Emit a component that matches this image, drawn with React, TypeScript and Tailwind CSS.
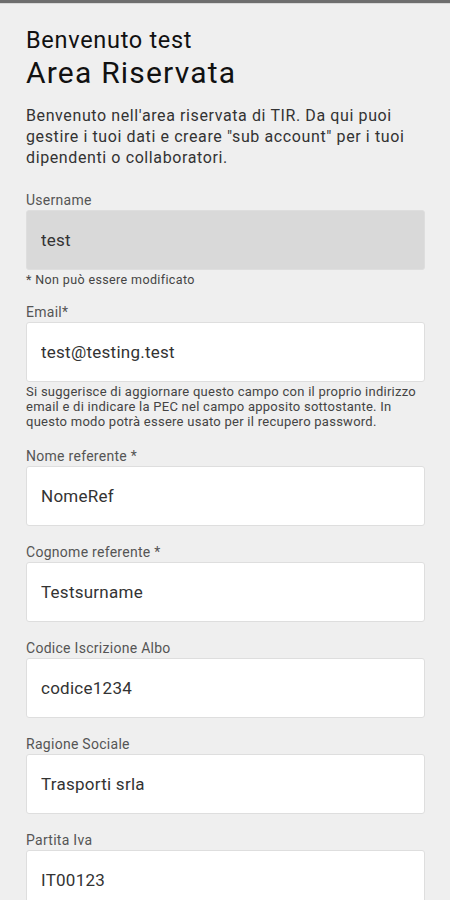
import { useState } from 'react';

type Field = {
  label: string;
  value: string;
  disabled?: boolean;
  note?: string;
  help?: string;
};

const FIELDS: Field[] = [
  { label: 'Username', value: 'test', disabled: true, note: '* Non può essere modificato' },
  {
    label: 'Email*',
    value: 'test@testing.test',
    help: 'Si suggerisce di aggiornare questo campo con il proprio indirizzo email e di indicare la PEC nel campo apposito sottostante. In questo modo potrà essere usato per il recupero password.',
  },
  { label: 'Nome referente *', value: 'NomeRef' },
  { label: 'Cognome referente *', value: 'Testsurname' },
  { label: 'Codice Iscrizione Albo', value: 'codice1234' },
  { label: 'Ragione Sociale', value: 'Trasporti srla' },
  { label: 'Partita Iva', value: 'IT00123' },
];

export default function App() {
  const [values, setValues] = useState<string[]>(FIELDS.map((f) => f.value));

  return (
    <div className="min-h-screen bg-[#efefef] font-['Roboto','Noto_Sans',sans-serif] overflow-hidden">
      <div className="h-[3px] bg-[#6e6e6e]" />
      <div className="h-px bg-[#d8d8d8]" />
      <div className="pl-[26px] pr-[25px] pt-[21px]">
        <div className="text-[23.5px] leading-[30px] tracking-[0.03em] text-[#111]">Benvenuto test</div>
        <h1 className="text-[30px] leading-[35px] tracking-[0.04em] text-[#111]">Area Riservata</h1>
        <p className="mt-[15px] text-[16px] leading-[21px] tracking-[0.038em] text-[#333]">
          Benvenuto nell'area riservata di TIR. Da qui puoi gestire i tuoi dati e creare "sub account" per i tuoi
          dipendenti o collaboratori.
        </p>

        <div className="mt-[24px]">
          {FIELDS.map((f, i) => (
            <div key={f.label} className={f.help ? 'mb-[19px]' : f.note ? 'mb-[17px]' : 'mb-[18px]'}>
              <label className="block text-[14px] leading-[16px] tracking-[0.02em] text-[#555] mb-[2px]">
                {f.label}
              </label>
              <input
                value={values[i]}
                disabled={f.disabled}
                onChange={(e) => {
                  const next = [...values];
                  next[i] = e.target.value;
                  setValues(next);
                }}
                className={
                  'block w-full h-[60px] px-[14px] rounded-[3px] border border-[#dedede] text-[17px] tracking-[0.015em] text-[#333] outline-none ' +
                  (f.disabled ? 'bg-[#d9d9d9]' : 'bg-white')
                }
              />
              {f.note && (
                <div className="mt-[2px] text-[12.5px] leading-[15px] tracking-[0.03em] text-[#444]">{f.note}</div>
              )}
              {f.help && (
                <div className="mt-[2px] text-[13px] leading-[15px] tracking-[0.02em] text-[#444]">{f.help}</div>
              )}
            </div>
          ))}
        </div>
      </div>
    </div>
  );
}
